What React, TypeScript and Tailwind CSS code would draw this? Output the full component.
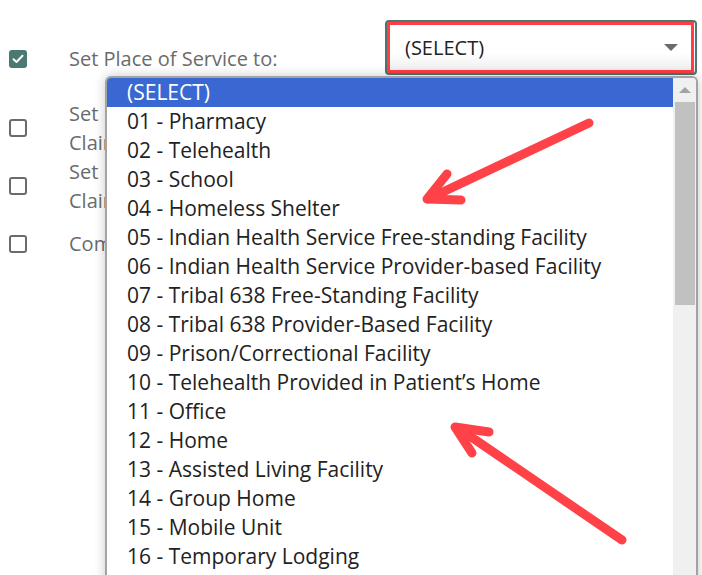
import React from "react";

const OPTIONS = [
  "(SELECT)",
  "01 - Pharmacy",
  "02 - Telehealth",
  "03 - School",
  "04 - Homeless Shelter",
  "05 - Indian Health Service Free-standing Facility",
  "06 - Indian Health Service Provider-based Facility",
  "07 - Tribal 638 Free-Standing Facility",
  "08 - Tribal 638 Provider-Based Facility",
  "09 - Prison/Correctional Facility",
  "10 - Telehealth Provided in Patient\u2019s Home",
  "11 - Office",
  "12 - Home",
  "13 - Assisted Living Facility",
  "14 - Group Home",
  "15 - Mobile Unit",
  "16 - Temporary Lodging",
];

function Checkbox({ checked }: { checked?: boolean }) {
  if (checked) {
    return (
      <div className="size-[18px] shrink-0 rounded-[3px] bg-[#4a7873] flex items-center justify-center">
        <svg width="12" height="10" viewBox="0 0 12 10" fill="none">
          <path d="M1.5 5.2 4.5 8 10.5 1.8" stroke="white" strokeWidth="2" strokeLinecap="round" strokeLinejoin="round" />
        </svg>
      </div>
    );
  }
  return <div className="size-[18px] shrink-0 rounded-[3px] border-2 border-[#6b6b6b] bg-white" />;
}

function Row({ checked, lines, clip }: { checked?: boolean; lines: string[]; clip?: boolean }) {
  return (
    <div className="flex items-center">
      <div className="w-[69px] pl-[9px]">
        <Checkbox checked={checked} />
      </div>
      <div className={"text-[20px] leading-[29px] text-[#6b6b6b] whitespace-nowrap " + (clip ? "w-[36px] overflow-hidden" : "")}>
        {lines.map((l) => (
          <div key={l}>{l}</div>
        ))}
      </div>
    </div>
  );
}

export default function App() {
  return (
    <div className="relative w-[702px] h-[575px] overflow-hidden bg-white font-['Open_Sans',sans-serif]">
      <div className="pt-[20px]">
        <div className="flex h-[55px]">
          <div className="mt-[24px]">
            <Row checked lines={["Set Place of Service to:"]} />
          </div>
          <div className="relative ml-auto mr-[5px] w-[312px] h-[55px] rounded-[4px] border-2 border-[#4b7671] bg-gradient-to-b from-white from-60% to-[#ededed] flex items-center pl-[18px] pr-[17px]">
            <span className="text-[20px] text-[#222]">(SELECT)</span>
            <span className="ml-auto w-0 h-0 border-l-[7px] border-r-[7px] border-t-[7px] border-l-transparent border-r-transparent border-t-[#6b6b6b]" />
            <div className="absolute left-0 top-0 right-[1px] bottom-0 border-[3px] border-[#ff3e45]" />
          </div>
        </div>
        <div className="mt-[24px] flex flex-col">
          <Row clip lines={["Set Rendering Provider on", "Claims to:"]} />
          <Row clip lines={["Set Referring Provider on", "Claims to:"]} />
          <div className="mt-[14px]">
            <Row clip lines={["Combine Claims"]} />
          </div>
        </div>
      </div>

      {/* open dropdown list */}
      <div className="absolute left-[105px] top-[76px] w-[593px] h-[520px] rounded-t-[6px] border-2 border-b-0 border-[#a3a3a3] bg-white shadow-[0_0_12px_rgba(0,0,0,0.22)] flex overflow-hidden">
        <div className="flex-1">
          {OPTIONS.map((o, i) => (
            <div
              key={o}
              className={
                "h-[29px] pl-[20px] flex items-center text-[21px] whitespace-nowrap " +
                (i === 0 ? "bg-[#3a68d2] text-white" : "text-[#222]")
              }
            >
              {o}
            </div>
          ))}
        </div>
        <div className="w-[23px] bg-[#f0f0f0] flex flex-col items-center">
          <div className="h-[24px] flex items-center justify-center">
            <span className="w-0 h-0 border-l-[6px] border-r-[6px] border-b-[6px] border-l-transparent border-r-transparent border-b-[#a3a3a3]" />
          </div>
          <div className="w-[20px] h-[203px] bg-[#c1c1c1]" />
        </div>
      </div>

      {/* annotation arrows */}
      <svg className="absolute left-0 top-0 pointer-events-none" width="702" height="575" viewBox="0 0 702 575">
        <g stroke="#ff4148" strokeWidth="9" strokeLinecap="round" strokeLinejoin="round" fill="none">
          <path d="M589 123 L428 199" />
          <path d="M447 174 L427 199 L461 200" />
          <path d="M622 540 L458 428" />
          <path d="M489 432 L455 427 L472 453" />
        </g>
      </svg>
    </div>
  );
}
